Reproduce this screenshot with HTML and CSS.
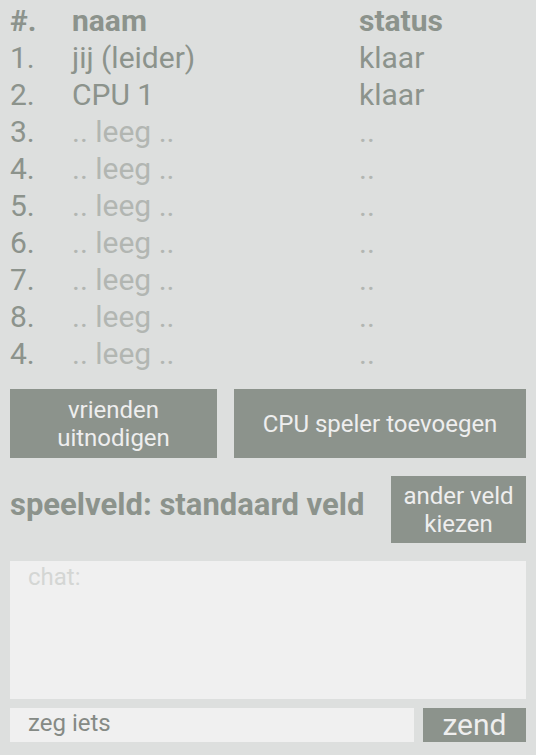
FILE: index.html
```html
<!DOCTYPE html>
<html lang="nl">
<head>
<meta charset="utf-8">
<title>Lobby</title>
<link rel="stylesheet" href="styles.css">
</head>
<body>
<div class="screen">
  <div class="players">
    <div class="cell num head">#.</div><div class="cell head">naam</div><div class="cell head">status</div>
    <div class="cell num">1.</div><div class="cell">jij (leider)</div><div class="cell">klaar</div>
    <div class="cell num">2.</div><div class="cell">CPU 1</div><div class="cell">klaar</div>
    <div class="cell num">3.</div><div class="cell empty">.. leeg ..</div><div class="cell empty">..</div>
    <div class="cell num">4.</div><div class="cell empty">.. leeg ..</div><div class="cell empty">..</div>
    <div class="cell num">5.</div><div class="cell empty">.. leeg ..</div><div class="cell empty">..</div>
    <div class="cell num">6.</div><div class="cell empty">.. leeg ..</div><div class="cell empty">..</div>
    <div class="cell num">7.</div><div class="cell empty">.. leeg ..</div><div class="cell empty">..</div>
    <div class="cell num">8.</div><div class="cell empty">.. leeg ..</div><div class="cell empty">..</div>
    <div class="cell num">4.</div><div class="cell empty">.. leeg ..</div><div class="cell empty">..</div>
  </div>

  <div class="actions">
    <button class="btn btn-invite">vrienden<br>uitnodigen</button>
    <button class="btn btn-cpu">CPU speler toevoegen</button>
  </div>

  <div class="field">
    <div class="field-label">speelveld: standaard veld</div>
    <button class="btn btn-field">ander veld<br>kiezen</button>
  </div>

  <div class="chat">
    <div class="chat-label">chat:</div>
  </div>

  <div class="send-row">
    <div class="input">zeg iets</div>
    <button class="btn btn-send">zend</button>
  </div>
</div>
</body>
</html>
```
FILE: styles.css
```css
html, body {
  margin: 0;
  padding: 0;
  background: #dddfde;
}
body {
  font-family: Roboto, "Noto Sans", sans-serif;
  color: #8c938c;
}
.screen {
  width: 536px;
  height: 755px;
  box-sizing: border-box;
  padding: 2px 10px 0 10px;
  display: flex;
  flex-direction: column;
}
.players {
  display: grid;
  grid-template-columns: 62px 287px 1fr;
  grid-auto-rows: 37px;
}
.cell {
  font-size: 30px;
  line-height: 37px;
  white-space: nowrap;
}
.head {
  font-weight: 700;
}
.num {
  color: #8c938c;
}
.empty {
  color: #b2b6b2;
}
.btn {
  border: 0;
  margin: 0;
  padding: 0;
  background: #8c938c;
  color: #eeeeee;
  font-family: Roboto, "Noto Sans", sans-serif;
  font-size: 24px;
  line-height: 28px;
  text-align: center;
}
.actions {
  display: flex;
  gap: 17px;
  margin-top: 17px;
  height: 69px;
}
.btn-invite {
  width: 207px;
}
.btn-cpu {
  flex: 1;
}
.field {
  display: flex;
  justify-content: space-between;
  align-items: center;
  margin-top: 18px;
  height: 67px;
}
.field-label {
  font-size: 31px;
  font-weight: 700;
  white-space: nowrap;
  margin-bottom: 10px;
}
.btn-field {
  width: 135px;
  height: 67px;
}
.chat {
  margin-top: 18px;
  height: 138px;
  background: #f0f0f0;
  box-sizing: border-box;
  padding: 2px 18px;
}
.chat-label {
  font-size: 24px;
  line-height: 28px;
  color: #d4d6d4;
}
.send-row {
  display: flex;
  gap: 9px;
  margin-top: 9px;
  height: 34px;
}
.input {
  flex: 1;
  background: #f0f0f0;
  color: #858a85;
  font-size: 24px;
  line-height: 30px;
  padding-left: 18px;
}
.btn-send {
  width: 103px;
  font-size: 30px;
  line-height: 34px;
}
```
